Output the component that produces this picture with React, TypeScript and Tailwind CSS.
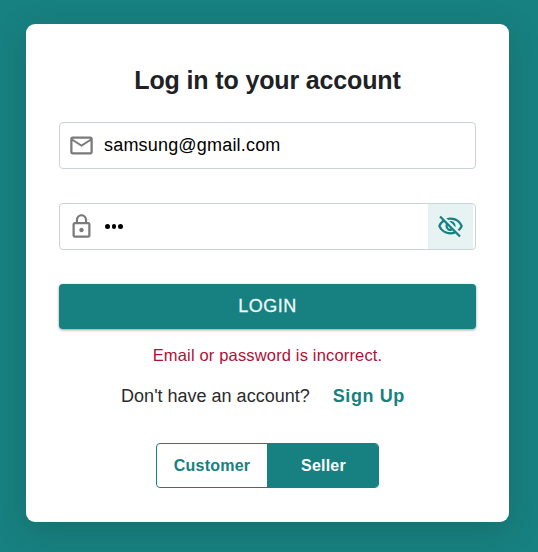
import React from "react";
import { MdMailOutline, MdLockOutline, MdOutlineVisibilityOff } from "react-icons/md";

const font = "font-['Liberation_Sans',Arial,sans-serif]";

export default function App() {
  return (
    <div className={`flex h-[552px] w-[538px] flex-col bg-[#178080] px-[26px] pt-6 ${font}`}>
      <main className="flex h-[498px] w-[483px] flex-col items-center rounded-[9px] bg-white px-[33px] shadow-[0_8px_30px_rgba(30,60,60,0.25)]">
        <h1 className="mt-10 h-8 whitespace-nowrap text-[25px] leading-8 font-bold tracking-[-0.14px] text-[#202124]">
          Log in to your account
        </h1>
        <label className="mt-[26px] flex h-[47px] w-[417px] items-center rounded-[4px] border border-[#cbd2d9] pl-[8px]">
          <MdMailOutline className="size-[27px] shrink-0 text-[#7a7a7a]" />
          <span className="mb-[2px] ml-[9px] text-[18px] leading-6 tracking-[0.19px] text-black">
            samsung@gmail.com
          </span>
        </label>
        <label className="mt-[34px] flex h-[47px] w-[417px] items-center rounded-[4px] border border-[#cbd2d9] pr-[2px] pl-[8px]">
          <MdLockOutline className="size-[27px] shrink-0 text-[#7a7a7a]" />
          <span className="ml-[10px] flex gap-[2px]">
            <i className="size-[4.5px] rounded-full bg-black" />
            <i className="size-[4.5px] rounded-full bg-black" />
            <i className="size-[4.5px] rounded-full bg-black" />
          </span>
          <button className="ml-auto flex h-full w-[45px] items-center justify-center bg-[#e7f2f2] text-[#178080]">
            <MdOutlineVisibilityOff className="size-[27px]" />
          </button>
        </label>
        <button className="mt-[34px] h-[45px] w-[417px] shrink-0 rounded-[4px] bg-[#178080] text-[18px] tracking-[0.5px] text-[#eefafa] shadow-[0_1px_3px_rgba(0,0,0,0.4)] [-webkit-text-stroke:0.3px_#eefafa]">
          LOGIN
        </button>
        <p className="mt-[14px] text-[16.5px] leading-6 tracking-[0.16px] whitespace-nowrap text-[#b00f35]">
          Email or password is incorrect.
        </p>
        <div className="mt-[17px] mr-[9px] flex h-6 items-center whitespace-nowrap text-[18px] leading-6 text-[#2b2b2b]">
          <span>Don&apos;t have an account?</span>
          <a className="ml-[23px] font-bold tracking-[0.6px] text-[#178080]">Sign Up</a>
        </div>
        <div className="mt-[35px] flex h-[45px] w-[223px] overflow-hidden rounded-[4px] border border-[#178080] text-[16px] font-bold">
          <button className="w-[110px] tracking-[0.25px] text-[#178080]">Customer</button>
          <button className="flex-1 bg-[#178080] pl-[2px] tracking-[0.2px] text-white">Seller</button>
        </div>
      </main>
    </div>
  );
}
